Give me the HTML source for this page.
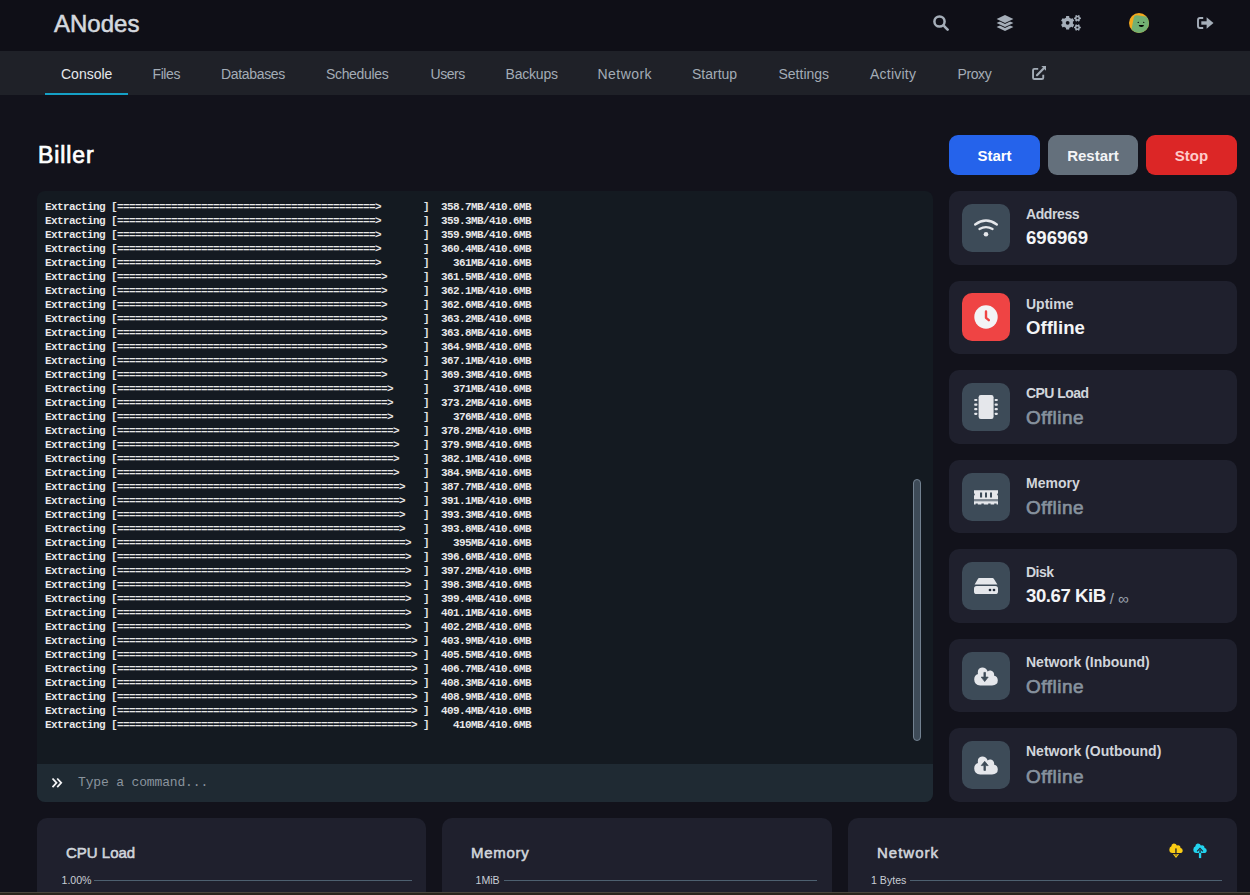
<!DOCTYPE html>
<html><head><meta charset="utf-8">
<style>
*{margin:0;padding:0;box-sizing:border-box}
html,body{width:1250px;height:895px;overflow:hidden;background:#12121b;font-family:"Liberation Sans",sans-serif}
.abs{position:absolute}
#hdr{position:absolute;left:0;top:0;width:1250px;height:51px;background:#0f0f17}
#logo{position:absolute;left:54px;top:10px;font-size:24px;line-height:28px;color:#d4d8de;white-space:nowrap;-webkit-text-stroke:0.55px #d4d8de}
#sub{position:absolute;left:0;top:51px;width:1250px;height:44px;background:#1f2128}
.nav{position:absolute;top:0.5px;height:44px;line-height:44px;font-size:14px;color:#a3acb6;white-space:nowrap}
.nav.act{color:#e5e7eb}
#uline{position:absolute;left:45px;top:42px;width:83px;height:2px;background:#15a0c6}
#title{position:absolute;left:38px;top:141px;font-size:23px;line-height:28px;font-weight:normal;letter-spacing:0.9px;-webkit-text-stroke:0.7px #fff;color:#fff;white-space:nowrap}
.btn{position:absolute;top:135px;height:40px;border-radius:9px;font-size:15px;font-weight:bold;line-height:42px;text-align:center}
#console{position:absolute;left:37px;top:191px;width:896px;height:611px;border-radius:8px;overflow:hidden;background:#141a21}
#term{position:absolute;left:8px;top:8.6px;width:600px;height:540px}
.tl{position:absolute;left:0;height:14px;font-family:"Liberation Mono",monospace;font-size:11px;letter-spacing:-0.6px;line-height:14px;color:#e8e8e8;white-space:pre;font-weight:bold;transform:scaleY(1.06);transform-origin:0 11px}
#inp{position:absolute;left:0;top:573px;width:896px;height:38px;background:#1f2a33}
#ph{position:absolute;left:41px;top:0;line-height:38px;font-family:"Liberation Mono",monospace;font-size:13px;letter-spacing:-0.15px;color:#8a949e;white-space:pre}
#thumb{position:absolute;left:876px;top:288px;width:8px;height:262px;border-radius:4px;background:#3e4b58;border:1px solid #728190}
.card{position:absolute;left:949px;width:288px;height:73.6px;border-radius:10px;background:#1f202d}
.ico{position:absolute;left:13px;top:12.8px;width:48px;height:48px;border-radius:10px;background:#3d4b58}
.lbl{position:absolute;left:77px;top:0;line-height:16px;font-size:14px;font-weight:bold;color:#d1d5db;white-space:nowrap}
.val{position:absolute;left:77px;top:0;line-height:22px;font-size:18.6px;font-weight:bold;color:#f3f4f6;white-space:nowrap}
.val.off{color:#87929e;font-weight:normal;font-size:19px;letter-spacing:0.5px;-webkit-text-stroke:0.65px #87929e}
.chart{position:absolute;top:818px;height:120px;border-radius:10px;background:#1f202d}
.ctitle{position:absolute;left:29px;top:25.5px;font-size:15px;font-weight:normal;-webkit-text-stroke:0.55px #d1d5db;color:#d1d5db;white-space:nowrap}
.clab{position:absolute;top:56px;font-size:10.6px;color:#c9ced5;white-space:nowrap}
.cline{position:absolute;top:61.5px;height:1px;background:#4d6070}
#strip{position:absolute;left:0;top:892px;width:1250px;height:3px;background:#29251d;border-top:1px solid #4a463d}
</style></head><body>
<div id="hdr">
  <div id="logo">ANodes</div>
  <svg class="abs" style="left:933px;top:15px" width="16" height="16" viewBox="0 0 16 16"><circle cx="6.5" cy="6.5" r="5.1" fill="none" stroke="#a5aeb9" stroke-width="2.5"/><line x1="10.4" y1="10.4" x2="14.6" y2="14.6" stroke="#a5aeb9" stroke-width="2.6" stroke-linecap="round"/></svg><svg class="abs" style="left:997px;top:15px;overflow:visible" width="16" height="17" viewBox="0 0 16 17"><path d="M-0.4,12.05 L8,8.00 L16.4,12.05 L8,16.10Z" fill="#a5aeb9"/><path d="M-2.16,8.05 L8,3.10 L18.16,8.05 L8,13.00Z" fill="#0f0f17"/><path d="M-0.4,8.05 L8,4.00 L16.4,8.05 L8,12.10Z" fill="#a5aeb9"/><path d="M-2.16,4.05 L8,-0.90 L18.16,4.05 L8,9.00Z" fill="#0f0f17"/><path d="M-0.4,4.05 L8,0.00 L16.4,4.05 L8,8.10Z" fill="#a5aeb9"/></svg><svg class="abs" style="left:1061px;top:15px" width="21" height="17" viewBox="0 0 21 17"><path fill-rule="evenodd" fill="#a5aeb9" d="M4.00,3.21 L4.96,2.78 L5.14,1.07 L8.16,1.07 L8.34,2.78 L9.30,3.21 L10.15,3.82 L11.73,3.13 L13.23,5.74 L11.85,6.75 L11.95,7.80 L11.85,8.85 L13.23,9.86 L11.73,12.47 L10.15,11.78 L9.30,12.39 L8.34,12.82 L8.16,14.53 L5.14,14.53 L4.96,12.82 L4.00,12.39 L3.15,11.78 L1.57,12.47 L0.07,9.86 L1.45,8.85 L1.35,7.80 L1.45,6.75 L0.07,5.74 L1.57,3.13 L3.15,3.82Z M8.55,7.80 A1.9,1.9 0 1,0 4.75,7.80 A1.9,1.9 0 1,0 8.55,7.80Z M18.75,2.00 L18.95,2.43 L19.90,2.48 L19.90,4.12 L18.95,4.17 L18.75,4.60 L18.48,4.99 L18.91,5.84 L17.49,6.66 L16.97,5.86 L16.50,5.90 L16.03,5.86 L15.51,6.66 L14.09,5.84 L14.52,4.99 L14.25,4.60 L14.05,4.17 L13.10,4.12 L13.10,2.48 L14.05,2.43 L14.25,2.00 L14.52,1.61 L14.09,0.76 L15.51,-0.06 L16.03,0.74 L16.50,0.70 L16.97,0.74 L17.49,-0.06 L18.91,0.76 L18.48,1.61Z M17.55,3.30 A1.05,1.05 0 1,0 15.45,3.30 A1.05,1.05 0 1,0 17.55,3.30Z M18.65,11.20 L18.85,11.63 L19.80,11.68 L19.80,13.32 L18.85,13.37 L18.65,13.80 L18.38,14.19 L18.81,15.04 L17.39,15.86 L16.87,15.06 L16.40,15.10 L15.93,15.06 L15.41,15.86 L13.99,15.04 L14.42,14.19 L14.15,13.80 L13.95,13.37 L13.00,13.32 L13.00,11.68 L13.95,11.63 L14.15,11.20 L14.42,10.81 L13.99,9.96 L15.41,9.14 L15.93,9.94 L16.40,9.90 L16.87,9.94 L17.39,9.14 L18.81,9.96 L18.38,10.81Z M17.45,12.50 A1.05,1.05 0 1,0 15.35,12.50 A1.05,1.05 0 1,0 17.45,12.50Z"/></svg><svg class="abs" style="left:1129px;top:13px" width="20" height="20" viewBox="0 0 20 20"><defs><clipPath id="avc"><circle cx="10" cy="10" r="10"/></clipPath></defs><g clip-path="url(#avc)"><rect width="20" height="20" fill="#f6a91b"/><path d="M1.8,20 L4.8,4.6 Q5.3,1.8 8,2.2 L23,4.4 L22,24 L1,24Z" fill="#72b072"/><g transform="translate(0.9,0)"><ellipse cx="8.4" cy="9.4" rx="0.8" ry="0.6" fill="#152015"/><ellipse cx="13.8" cy="9.3" rx="0.8" ry="0.6" fill="#152015"/><path d="M8.8,11.9 H14.1 Q13.9,13.9 11.45,13.9 Q9,13.9 8.8,11.9Z" fill="#000"/></g></g></svg><svg class="abs" style="left:1197px;top:17px" width="17" height="12" viewBox="0 0 17 12"><path d="M6.2,1 H3 Q1,1 1,3 V9 Q1,11 3,11 H6.2" fill="none" stroke="#a5aeb9" stroke-width="1.9"/><rect x="4.3" y="4.3" width="6" height="3.4" fill="#a5aeb9"/><path d="M9.6,0.2 L16.5,6 L9.6,11.8Z" fill="#a5aeb9"/></svg>
</div>
<div id="sub">
  <div class="nav act" style="left:61px">Console</div>
  <div class="nav" style="left:152.5px;letter-spacing:-0.4px">Files</div>
  <div class="nav" style="left:221px;letter-spacing:-0.33px">Databases</div>
  <div class="nav" style="left:326px;letter-spacing:-0.34px">Schedules</div>
  <div class="nav" style="left:430.5px;letter-spacing:-0.47px">Users</div>
  <div class="nav" style="left:505.5px;letter-spacing:-0.2px">Backups</div>
  <div class="nav" style="left:597.5px;letter-spacing:0.45px">Network</div>
  <div class="nav" style="left:692px">Startup</div>
  <div class="nav" style="left:778.5px">Settings</div>
  <div class="nav" style="left:870px;letter-spacing:0.23px">Activity</div>
  <div class="nav" style="left:957.5px;letter-spacing:-0.4px">Proxy</div>
  <svg class="abs" style="left:1031px;top:14px" width="16" height="16" viewBox="0 0 16 16"><path d="M7.2,3.85 H3.4 Q2.05,3.85 2.05,5.2 V12.7 Q2.05,14.05 3.4,14.05 H10.9 Q12.25,14.05 12.25,12.7 V9.8" fill="none" stroke="#a3acb6" stroke-width="1.9"/><path d="M10.3,1 H15 V5.7Z" fill="#a3acb6"/><line x1="6" y1="10.2" x2="12.6" y2="3.4" stroke="#a3acb6" stroke-width="2.2" stroke-linecap="round"/></svg>
  <div id="uline"></div>
</div>
<div id="title">Biller</div>
<div class="btn" style="left:949px;width:91px;background:#2563eb;color:#fff">Start</div>
<div class="btn" style="left:1048px;width:90px;background:#64707c;color:#f3f4f6">Restart</div>
<div class="btn" style="left:1146px;width:91px;background:#dc2626;color:#fecaca">Stop</div>
<div id="console">
<div id="term"><div class="tl" style="top:0px">Extracting [===========================================>       ]  358.7MB/410.6MB</div><div class="tl" style="top:14px">Extracting [===========================================>       ]  359.3MB/410.6MB</div><div class="tl" style="top:28px">Extracting [===========================================>       ]  359.9MB/410.6MB</div><div class="tl" style="top:42px">Extracting [===========================================>       ]  360.4MB/410.6MB</div><div class="tl" style="top:56px">Extracting [===========================================>       ]    361MB/410.6MB</div><div class="tl" style="top:70px">Extracting [============================================>      ]  361.5MB/410.6MB</div><div class="tl" style="top:84px">Extracting [============================================>      ]  362.1MB/410.6MB</div><div class="tl" style="top:98px">Extracting [============================================>      ]  362.6MB/410.6MB</div><div class="tl" style="top:112px">Extracting [============================================>      ]  363.2MB/410.6MB</div><div class="tl" style="top:126px">Extracting [============================================>      ]  363.8MB/410.6MB</div><div class="tl" style="top:140px">Extracting [============================================>      ]  364.9MB/410.6MB</div><div class="tl" style="top:154px">Extracting [============================================>      ]  367.1MB/410.6MB</div><div class="tl" style="top:168px">Extracting [============================================>      ]  369.3MB/410.6MB</div><div class="tl" style="top:182px">Extracting [=============================================>     ]    371MB/410.6MB</div><div class="tl" style="top:196px">Extracting [=============================================>     ]  373.2MB/410.6MB</div><div class="tl" style="top:210px">Extracting [=============================================>     ]    376MB/410.6MB</div><div class="tl" style="top:224px">Extracting [==============================================>    ]  378.2MB/410.6MB</div><div class="tl" style="top:238px">Extracting [==============================================>    ]  379.9MB/410.6MB</div><div class="tl" style="top:252px">Extracting [==============================================>    ]  382.1MB/410.6MB</div><div class="tl" style="top:266px">Extracting [==============================================>    ]  384.9MB/410.6MB</div><div class="tl" style="top:280px">Extracting [===============================================>   ]  387.7MB/410.6MB</div><div class="tl" style="top:294px">Extracting [===============================================>   ]  391.1MB/410.6MB</div><div class="tl" style="top:308px">Extracting [===============================================>   ]  393.3MB/410.6MB</div><div class="tl" style="top:322px">Extracting [===============================================>   ]  393.8MB/410.6MB</div><div class="tl" style="top:336px">Extracting [================================================>  ]    395MB/410.6MB</div><div class="tl" style="top:350px">Extracting [================================================>  ]  396.6MB/410.6MB</div><div class="tl" style="top:364px">Extracting [================================================>  ]  397.2MB/410.6MB</div><div class="tl" style="top:378px">Extracting [================================================>  ]  398.3MB/410.6MB</div><div class="tl" style="top:392px">Extracting [================================================>  ]  399.4MB/410.6MB</div><div class="tl" style="top:406px">Extracting [================================================>  ]  401.1MB/410.6MB</div><div class="tl" style="top:420px">Extracting [================================================>  ]  402.2MB/410.6MB</div><div class="tl" style="top:434px">Extracting [=================================================> ]  403.9MB/410.6MB</div><div class="tl" style="top:448px">Extracting [=================================================> ]  405.5MB/410.6MB</div><div class="tl" style="top:462px">Extracting [=================================================> ]  406.7MB/410.6MB</div><div class="tl" style="top:476px">Extracting [=================================================> ]  408.3MB/410.6MB</div><div class="tl" style="top:490px">Extracting [=================================================> ]  408.9MB/410.6MB</div><div class="tl" style="top:504px">Extracting [=================================================> ]  409.4MB/410.6MB</div><div class="tl" style="top:518px">Extracting [=================================================> ]    410MB/410.6MB</div></div>
<div id="thumb"></div>
<div id="inp"><svg class="abs" style="left:14px;top:13px" width="12" height="12" viewBox="0 0 12 12"><path d="M1.5,1.5 L5.5,5.8 L1.5,10.1 M6.2,1.5 L10.2,5.8 L6.2,10.1" fill="none" stroke="#f3f4f6" stroke-width="1.8"/></svg><div id="ph">Type a command...</div></div>
</div>
<div class="card" style="top:191.00px"><div class="ico"><svg class="abs" style="left:12px;top:14px" width="24" height="20" viewBox="0 0 24 20"><path d="M1.2,6.5 Q12,-1.4 22.8,6.5" fill="none" stroke="#e5e7eb" stroke-width="2.3" stroke-linecap="round"/><path d="M5.45,11 Q12,7.4 18.55,11" fill="none" stroke="#e5e7eb" stroke-width="2.3" stroke-linecap="round"/><circle cx="12" cy="16.2" r="2.3" fill="#e5e7eb"/></svg></div><div class="lbl" style="top:15px;letter-spacing:-0.4px">Address</div><div class="val " style="top:36px"><span>696969</span></div></div>
<div class="card" style="top:280.57px"><div class="ico" style="background:#ef4444"><svg class="abs" style="left:12px;top:12px" width="24" height="24" viewBox="0 0 24 24"><circle cx="12" cy="12" r="11.7" fill="#f3f4f6"/><path d="M12,6.5 V12.8 L14.8,15.2" fill="none" stroke="#ef4444" stroke-width="2.4" stroke-linecap="round" stroke-linejoin="round"/></svg></div><div class="lbl" style="top:15px;letter-spacing:0px">Uptime</div><div class="val " style="top:36px"><span>Offline</span></div></div>
<div class="card" style="top:370.14px"><div class="ico"><svg class="abs" style="left:12px;top:12px" width="24" height="24" viewBox="0 0 24 24"><rect x="4.6" y="0" width="15" height="24" rx="2.2" fill="#e5e7eb"/><rect x="0.2" y="3.9" width="3.2" height="2.2" rx="0.8" fill="#e5e7eb"/><rect x="20.6" y="3.9" width="3.2" height="2.2" rx="0.8" fill="#e5e7eb"/><rect x="0.2" y="8.5" width="3.2" height="2.2" rx="0.8" fill="#e5e7eb"/><rect x="20.6" y="8.5" width="3.2" height="2.2" rx="0.8" fill="#e5e7eb"/><rect x="0.2" y="13.1" width="3.2" height="2.2" rx="0.8" fill="#e5e7eb"/><rect x="20.6" y="13.1" width="3.2" height="2.2" rx="0.8" fill="#e5e7eb"/><rect x="0.2" y="17.7" width="3.2" height="2.2" rx="0.8" fill="#e5e7eb"/><rect x="20.6" y="17.7" width="3.2" height="2.2" rx="0.8" fill="#e5e7eb"/></svg></div><div class="lbl" style="top:15px;letter-spacing:-0.55px">CPU Load</div><div class="val off" style="top:37.2px"><span>Offline</span></div></div>
<div class="card" style="top:459.71px"><div class="ico"><svg class="abs" style="left:12px;top:12px" width="24" height="24" viewBox="0 0 24 24"><path fill-rule="evenodd" fill="#e5e7eb" d="M0,5.3 H24 V8.3 Q23.2,8.6 23.2,9.4 Q23.2,10.2 24,10.5 V14.4 H0 V10.5 Q0.8,10.2 0.8,9.4 Q0.8,8.6 0,8.3Z M6,7.5 V12.5 H8.1 V7.5Z M11,7.5 V12.5 H13 V7.5Z M16,7.5 V12.5 H18 V7.5Z"/><rect x="0" y="14.4" width="24" height="1.9" fill="#7b858f"/><path fill="#e5e7eb" d="M0,16.3 H24 V19.6 H22.6 V18.6 H20.2 V19.6 H16.6 V18.6 H14.2 V19.6 H9.8 V18.6 H7.4 V19.6 H3.8 V18.6 H1.6 V19.6 H0Z"/></svg></div><div class="lbl" style="top:15px;letter-spacing:0px">Memory</div><div class="val off" style="top:37.2px"><span>Offline</span></div></div>
<div class="card" style="top:549.28px"><div class="ico"><svg class="abs" style="left:12px;top:12px" width="24" height="24" viewBox="0 0 24 24"><path d="M5,4 H18.6 Q19.3,4 19.8,4.7 L23.4,10.5 H0.6 L4,4.7 Q4.4,4 5,4Z" fill="#e5e7eb"/><rect x="0" y="12" width="24" height="8" rx="2.6" fill="#e5e7eb"/><circle cx="16" cy="16" r="1.35" fill="#1f2937"/><circle cx="20" cy="16" r="1.35" fill="#1f2937"/></svg></div><div class="lbl" style="top:15px;letter-spacing:-0.5px">Disk</div><div class="val disk" style="top:36px"><span style="letter-spacing:-0.45px">30.67 KiB</span><span style="font-size:15px;font-weight:normal;color:#9ca3af;margin-left:4px;letter-spacing:0;position:relative;top:2px">/ &#8734;</span></div></div>
<div class="card" style="top:638.85px"><div class="ico"><svg class="abs" style="left:12px;top:15px" width="24" height="19" viewBox="0 0 24 19"><path d="M6.2,18.4 H18 Q23.8,18.4 23.8,13.6 Q23.8,9.6 20.2,8.8 Q20.4,4.4 16.8,3.6 Q14.9,3.2 13.7,4.5 Q12.1,0.4 8,0.6 Q3.7,1 3.8,5.6 Q3.8,6.6 4,7.1 Q0.2,8.4 0.2,12.6 Q0.4,18.4 6.2,18.4Z" fill="#e5e7eb"/><path d="M9.9,5.4 H11.5 V10.1 H14.2 L10.7,14.6 L7.2,10.1 H9.9Z" fill="#3d4b58" stroke="#3d4b58" stroke-width="0.7" stroke-linejoin="round"/></svg></div><div class="lbl" style="top:15px;letter-spacing:0px">Network (Inbound)</div><div class="val off" style="top:37.2px"><span>Offline</span></div></div>
<div class="card" style="top:728.42px"><div class="ico"><svg class="abs" style="left:12px;top:15px" width="24" height="19" viewBox="0 0 24 19"><path d="M6.2,18.4 H18 Q23.8,18.4 23.8,13.6 Q23.8,9.6 20.2,8.8 Q20.4,4.4 16.8,3.6 Q14.9,3.2 13.7,4.5 Q12.1,0.4 8,0.6 Q3.7,1 3.8,5.6 Q3.8,6.6 4,7.1 Q0.2,8.4 0.2,12.6 Q0.4,18.4 6.2,18.4Z" fill="#e5e7eb"/><path d="M9.9,14.4 H11.5 V9.6 H14.2 L10.7,5.3 L7.2,9.6 H9.9Z" fill="#3d4b58" stroke="#3d4b58" stroke-width="0.7" stroke-linejoin="round"/></svg></div><div class="lbl" style="top:15px;letter-spacing:0px">Network (Outbound)</div><div class="val off" style="top:37.2px"><span>Offline</span></div></div>

<div class="chart" style="left:37px;width:389px"><div class="ctitle">CPU Load</div><div class="clab" style="left:24.5px">1.00%</div><div class="cline" style="left:57px;width:317.5px"></div></div>
<div class="chart" style="left:442px;width:390px"><div class="ctitle" style="letter-spacing:0.7px">Memory</div><div class="clab" style="left:33.5px">1MiB</div><div class="cline" style="left:61.5px;width:313px"></div></div>
<div class="chart" style="left:848px;width:389px"><div class="ctitle" style="letter-spacing:1px">Network</div><svg class="abs" style="left:321px;top:25px" width="14" height="16" viewBox="0 0 14 16"><path d="M3.3,10 H10.8 Q13.7,10 13.7,7.4 Q13.7,5.2 11.6,4.9 Q11.6,2.5 9.4,2.2 Q8.6,2.1 7.9,2.6 Q7,0.2 4.6,0.4 Q2.2,0.8 2.4,3.3 Q0.3,4.1 0.3,6.8 Q0.5,10 3.3,10Z" fill="#facc15"/><rect x="6.3" y="5.4" width="1.3" height="4.8" fill="#1f202d"/><path d="M3.9,10.9 H10.1 L7,15.1Z" fill="#facc15"/><path d="M5.3,10.5 L7,12.6 L8.7,10.5" fill="none" stroke="#1f202d" stroke-width="0.7"/></svg><svg class="abs" style="left:345px;top:25px" width="14" height="16" viewBox="0 0 14 16"><path d="M3.3,10 H10.8 Q13.7,10 13.7,7.4 Q13.7,5.2 11.6,4.9 Q11.6,2.5 9.4,2.2 Q8.6,2.1 7.9,2.6 Q7,0.2 4.6,0.4 Q2.2,0.8 2.4,3.3 Q0.3,4.1 0.3,6.8 Q0.5,10 3.3,10Z" fill="#22d3ee"/><path d="M4.1,8.3 L7,5.4 L9.9,8.3" fill="none" stroke="#1f202d" stroke-width="1.1"/><rect x="6.3" y="6.8" width="1.5" height="3.4" fill="#1f3a48"/><rect x="5.9" y="10" width="2.3" height="5.1" fill="#22d3ee"/></svg><div class="clab" style="left:23px">1 Bytes</div><div class="cline" style="left:62px;width:311.5px"></div></div>
<div id="strip"></div>
</body></html>
